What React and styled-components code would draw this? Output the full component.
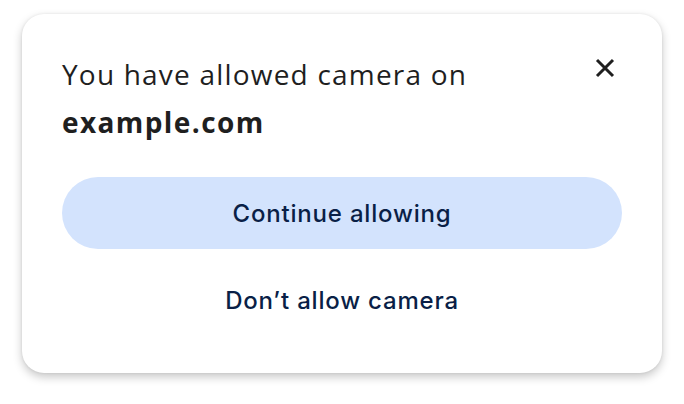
import React from 'react';
import styled, { createGlobalStyle } from 'styled-components';

const GlobalStyle = createGlobalStyle`
    html, body {
        margin: 0;
        padding: 0;
        background: #ffffff;
    }
    body {
        font-family: "Open Sans", Roboto, "Liberation Sans", sans-serif;
    }
`;

const Page = styled.div`
    width: 684px;
    height: 404px;
    padding: 14px 22px 0 22px;
    box-sizing: border-box;
`;

const Card = styled.div`
    width: 640px;
    height: 359px;
    box-sizing: border-box;
    padding: 36px 40px 36px 40px;
    background: #ffffff;
    border-radius: 22px;
    box-shadow: 0 4px 10px rgba(0, 0, 0, 0.22), 0 0 3px rgba(0, 0, 0, 0.08);
    display: flex;
    flex-direction: column;
`;

const Header = styled.div`
    display: flex;
    justify-content: space-between;
    align-items: flex-start;
`;

const Title = styled.div`
    font-size: 28px;
    line-height: 48px;
    color: #1f1f1f;
    letter-spacing: 1.2px;
`;

const Site = styled.span`
    display: block;
    font-weight: 700;
    letter-spacing: 1.4px;
`;

const CloseButton = styled.button`
    border: none;
    background: transparent;
    padding: 0;
    margin: 8px 7px 0 0;
    width: 20px;
    height: 20px;
    display: flex;
    cursor: pointer;
`;

const Actions = styled.div`
    margin-top: 31px;
    display: flex;
    flex-direction: column;
    gap: 15px;
`;

const Action = styled.button`
    height: 72px;
    width: 100%;
    border: none;
    border-radius: 36px;
    background: ${p => (p.$primary ? '#d3e3fd' : 'transparent')};
    color: #0a1f47;
    font-family: Inter, "Open Sans", sans-serif;
    font-size: 24px;
    font-weight: 500;
    letter-spacing: 0.8px;
    cursor: pointer;
`;

function CloseIcon () {
    return (
        <svg width="20" height="20" viewBox="0 0 20 20">
            <path d="M2 2 L18 18 M18 2 L2 18" stroke="#1f1f1f" strokeWidth="3" fill="none" />
        </svg>
    );
}

function App () {
    return (
        <Page>
            <GlobalStyle />
            <Card>
                <Header>
                    <Title>
                        You have allowed camera on
                        <Site>example.com</Site>
                    </Title>
                    <CloseButton aria-label="Close"><CloseIcon /></CloseButton>
                </Header>
                <Actions>
                    <Action $primary>Continue allowing</Action>
                    <Action>Don’t allow camera</Action>
                </Actions>
            </Card>
        </Page>
    );
}

export default App;
